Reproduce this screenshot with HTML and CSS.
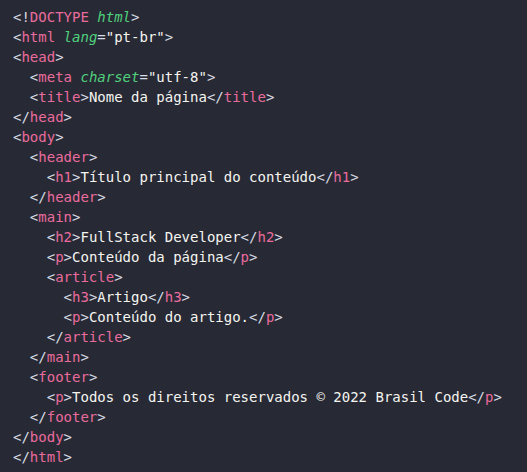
FILE: index.html
```html
<!DOCTYPE html>
<html lang="pt-br">
<head>
<meta charset="utf-8">
<title>Código</title>
<link rel="stylesheet" href="styles.css">
</head>
<body>
<pre class="code"><span class="p">&lt;!</span><span class="t">DOCTYPE</span> <span class="a">html</span><span class="p">&gt;</span>
<span class="p">&lt;</span><span class="t">html</span> <span class="a">lang</span><span class="p">=</span><span class="s">"pt-br"</span><span class="p">&gt;</span>
<span class="p">&lt;</span><span class="t">head</span><span class="p">&gt;</span>
  <span class="p">&lt;</span><span class="t">meta</span> <span class="a">charset</span><span class="p">=</span><span class="s">"utf-8"</span><span class="p">&gt;</span>
  <span class="p">&lt;</span><span class="t">title</span><span class="p">&gt;</span>Nome da página<span class="p">&lt;/</span><span class="t">title</span><span class="p">&gt;</span>
<span class="p">&lt;/</span><span class="t">head</span><span class="p">&gt;</span>
<span class="p">&lt;</span><span class="t">body</span><span class="p">&gt;</span>
  <span class="p">&lt;</span><span class="t">header</span><span class="p">&gt;</span>
    <span class="p">&lt;</span><span class="t">h1</span><span class="p">&gt;</span>Título principal do conteúdo<span class="p">&lt;/</span><span class="t">h1</span><span class="p">&gt;</span>
  <span class="p">&lt;/</span><span class="t">header</span><span class="p">&gt;</span>
  <span class="p">&lt;</span><span class="t">main</span><span class="p">&gt;</span>
    <span class="p">&lt;</span><span class="t">h2</span><span class="p">&gt;</span>FullStack Developer<span class="p">&lt;/</span><span class="t">h2</span><span class="p">&gt;</span>
    <span class="p">&lt;</span><span class="t">p</span><span class="p">&gt;</span>Conteúdo da página<span class="p">&lt;/</span><span class="t">p</span><span class="p">&gt;</span>
    <span class="p">&lt;</span><span class="t">article</span><span class="p">&gt;</span>
      <span class="p">&lt;</span><span class="t">h3</span><span class="p">&gt;</span>Artigo<span class="p">&lt;/</span><span class="t">h3</span><span class="p">&gt;</span>
      <span class="p">&lt;</span><span class="t">p</span><span class="p">&gt;</span>Conteúdo do artigo.<span class="p">&lt;/</span><span class="t">p</span><span class="p">&gt;</span>
    <span class="p">&lt;/</span><span class="t">article</span><span class="p">&gt;</span>
  <span class="p">&lt;/</span><span class="t">main</span><span class="p">&gt;</span>
  <span class="p">&lt;</span><span class="t">footer</span><span class="p">&gt;</span>
    <span class="p">&lt;</span><span class="t">p</span><span class="p">&gt;</span>Todos os direitos reservados © 2022 Brasil Code<span class="p">&lt;/</span><span class="t">p</span><span class="p">&gt;</span>
  <span class="p">&lt;/</span><span class="t">footer</span><span class="p">&gt;</span>
<span class="p">&lt;/</span><span class="t">body</span><span class="p">&gt;</span>
<span class="p">&lt;/</span><span class="t">html</span><span class="p">&gt;</span></pre>
</body>
</html>
```
FILE: styles.css
```css
html, body {
  margin: 0;
  padding: 0;
  background: #272935;
  height: 100%;
}
.code {
  margin: 0;
  padding: 7px 13px 6px;
  font-family: "DejaVu Sans Mono", monospace;
  font-size: 14px;
  line-height: 20px;
  color: #f5f5f0;
  background: #272935;
}
.p { color: #d8dce4; }
.t { color: #ea6c9c; }
.a { color: #50d07c; font-style: italic; }
.s { color: #f5f5f0; }
```
